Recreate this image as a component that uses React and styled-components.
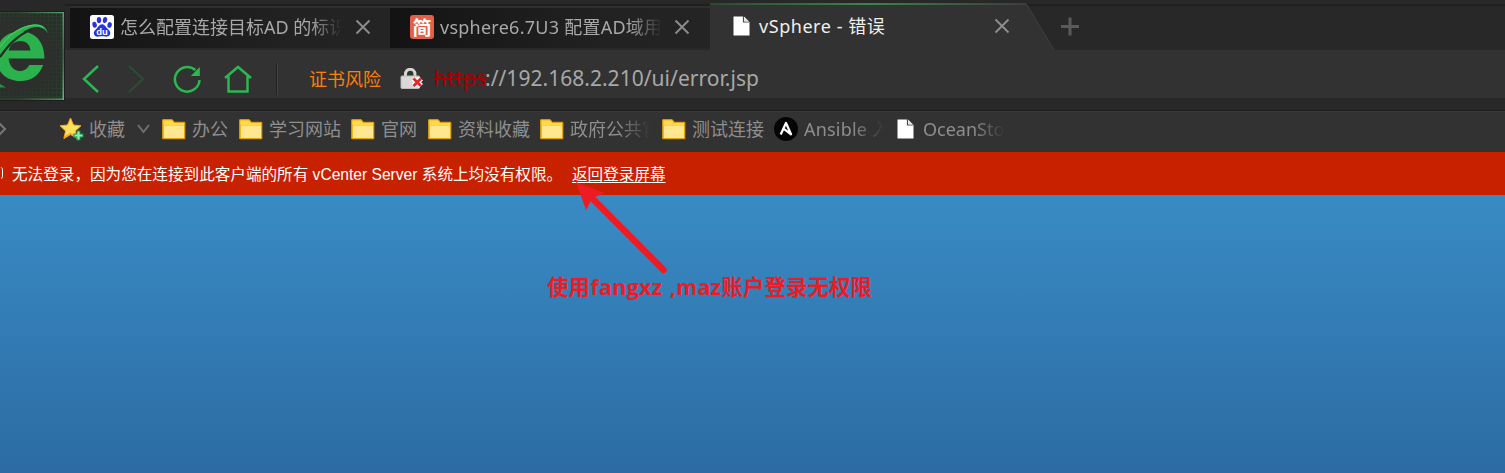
import React from 'react';
import styled, { createGlobalStyle, css } from 'styled-components';

const ui = `"Noto Sans", "Noto Sans CJK SC", sans-serif`;

const Global = createGlobalStyle`
  body { margin: 0; background: #282828; overflow: hidden; }
  * { box-sizing: border-box; }
  svg { display: block; flex: none; }
`;

const Page = styled.div`
  display: flex;
  flex-direction: column;
  width: 1505px;
  height: 473px;
  overflow: hidden;
  font-family: ${ui};
`;

const Chrome = styled.header`
  display: flex;
  height: 110px;
  background: #282828;
`;

const LogoBox = styled.div`
  width: 65px;
  height: 90px;
  margin-top: 11px;
  border: 1px solid #1b1f1c;
  border-left: 0;
  overflow: hidden;
`;

const ChromeMain = styled.div`
  flex: 1;
  display: flex;
  flex-direction: column;
`;

const TabStrip = styled.nav`
  display: flex;
  height: 50px;
  padding: 0 0 0 5px;
  background: linear-gradient(#282828 0 4px, #202020 4px 6px, #282828 6px);
`;

const Tab = styled.div`
  display: flex;
  align-items: center;
  width: 320px;
  height: 42px;
  margin-top: 6px;
  padding: 0 0 3px 20px;
  border-top: 2px solid #2f2f2f;
  background: linear-gradient(90deg, #131313 0, #1b1b1b 35%, #222 70%, #242424);
`;

const ActiveTab = styled.div`
  position: relative;
  display: flex;
  align-items: center;
  width: 346px;
  height: 47px;
  margin-top: 3px;
  padding: 0 0 1px 23px;
`;

const TabShape = styled.svg`
  position: absolute;
  inset: 0;
`;

const fade = css`
  mask-image: linear-gradient(90deg, #000 calc(100% - 32px), transparent 100%);
`;

const Label = styled.span`
  display: block;
  flex: none;
  position: relative;
  overflow: ${p => (p.$fade ? 'hidden' : 'visible')};
  white-space: pre;
  width: ${p => (p.$w ? `${p.$w}px` : 'auto')};
  font-size: ${p => p.$size || 18}px;
  line-height: 26px;
  letter-spacing: ${p => p.$track || 0}px;
  color: ${p => p.$color || '#a8a8a8'};
  ${p => p.$fade && fade}
`;

const TabLabel = styled(Label)`
  margin-left: ${p => p.$gap ?? 6}px;
`;

const CloseSlot = styled.div`
  position: relative;
  margin-left: ${p => p.$gap}px;
`;

const PlusSlot = styled.div`
  margin: 17px 0 0 4px;
`;

const AddressBar = styled.div`
  display: flex;
  align-items: center;
  height: 48px;
  padding: 10px 0 0 16px;
  background: #323232;
`;

const NavIcon = styled.div`
  width: ${p => p.$w}px;
`;

const Divider = styled.i`
  width: 2px;
  height: 32px;
  margin-right: 31px;
  background: linear-gradient(90deg, #222 50%, #444 50%);
`;

const Risk = styled(Label)`
  width: 91px;
`;

const Url = styled.div`
  display: flex;
  margin-left: 10px;
  padding-bottom: 2px;
`;

const Scheme = styled(Label)`
  text-decoration: line-through;
  text-decoration-thickness: 1.5px;
`;

const Bookmarks = styled.nav`
  display: flex;
  align-items: center;
  height: 42px;
  padding-bottom: 5px;
  border-top: 1px solid #1e1e1e;
  background: linear-gradient(#383838 0 1px, #323232 1px);
`;

const Bookmark = styled.div`
  display: flex;
  align-items: center;
  flex: none;
  width: ${p => p.$w}px;
`;

const IconCell = styled.span`
  display: flex;
  width: ${p => p.$w || 29}px;
  flex: none;
`;

const ErrorBar = styled.div`
  display: flex;
  align-items: center;
  height: 43px;
  padding-top: 2px;
  background: #c82100;
  color: #fff;
  font: 15.6px/22px "Liberation Sans", "Noto Sans CJK SC", sans-serif;
  white-space: pre;
`;

const InfoMark = styled.i`
  width: 3px;
  height: 12px;
  margin: -3px 9px 0 0;
  border-right: 1.5px solid #fff;
  border-radius: 0 5px 5px 0 / 0 6px 6px 0;
`;

const Message = styled.span`
  width: 560px;
`;

const BackLink = styled.a`
  text-decoration: underline;
  text-underline-offset: 1.5px;
  text-decoration-thickness: 1px;
`;

const Content = styled.main`
  position: relative;
  flex: 1;
  background: linear-gradient(#398bc5, #2c6ba3);
`;

const Arrow = styled.svg`
  position: absolute;
  left: 570px;
  top: -18px;
`;

const Note = styled.div`
  position: absolute;
  left: 547px;
  top: 77px;
  display: flex;
  color: #ed1c24;
  font: bold 21.5px/30px "Open Sans", "Noto Sans CJK SC", sans-serif;
  white-space: pre;
`;

const NoteRun = styled.span`
  width: ${p => p.$w}px;
  letter-spacing: ${p => p.$track || 0}px;
`;

const Close = () => (
  <svg width="16" height="16" viewBox="0 0 16 16" stroke="#8d8d8d" strokeWidth="1.9" fill="none">
    <path d="M1.500 1.500l13 13M14.500 1.500l-13 13" />
  </svg>
);

const Folder = () => (
  <svg width="24" height="21" viewBox="0 0 24 21">
    <path d="M.7.7h9.600l2 2.600h10.500v16.400H.7z" fill="#f5b81d" stroke="#e9a40b" />
    <path d="M1.500 1.500h8.300l2 2.600h10.200v2H1.500z" fill="#ffd94e" />
    <path d="M2 6.500h20v12.500H2z" fill="#ffe790" />
  </svg>
);

const Doc = () => (
  <svg width="17" height="20" viewBox="0 0 17 20">
    <path d="M.5.500h10.500l5.500 5.700v13.300H.5z" fill="#fff" />
    <path d="M10.500 0v6h6" fill="none" stroke="#484848" strokeWidth="1.200" />
    <path d="M12 1.500l4 4h-4z" fill="#ddd" />
  </svg>
);

const Star = () => (
  <svg width="24" height="24" viewBox="0 0 24 24">
    <path d="M10.500 1l3 7 7.500.7-5.600 5.300 1.700 7.500-6.600-4-6.600 4 1.700-7.500L0 8.700l7.500-.7z" fill="#ffe05a" stroke="#f5a91a" strokeLinejoin="round" />
    <path d="M4 20.500l6.500-4 6.300 4-1.500-6.500" fill="none" stroke="#f5a523" strokeWidth="1.200" />
    <path d="M16.500 13.500h4v3h3v4h-3v3h-4v-3h-3v-4h3z" fill="#158d4d" />
    <path d="M18.500 14.500v8M14.500 18.500h8" stroke="#88f0b3" strokeWidth="2.200" />
  </svg>
);

const Ansible = () => (
  <svg width="24" height="24" viewBox="0 0 24 24">
    <circle cx="12" cy="12" r="12" fill="#050505" />
    <path d="M6.700 17.500L12 6l5 11.300-7.500-5.600" fill="none" stroke="#fff" strokeWidth="2.300" strokeLinejoin="round" />
  </svg>
);

const Baidu = () => (
  <svg width="24" height="24" viewBox="0 0 24 24">
    <rect width="24" height="24" rx="2.500" fill="#fff" />
    <g fill="#2932e1">
      <ellipse cx="4.600" cy="9.800" rx="2.200" ry="3" transform="rotate(-12 4.600 9.800)" />
      <ellipse cx="9" cy="5" rx="2.200" ry="3.100" />
      <ellipse cx="15" cy="5" rx="2.200" ry="3.100" transform="rotate(8 15 5)" />
      <ellipse cx="19.600" cy="10" rx="2.200" ry="2.900" transform="rotate(12 19.600 10)" />
      <path d="M12 9.200c2.600 0 3.700 2.800 5.600 4.500 2 1.700 3 3.200 2.600 5.100-.6 2.900-3.500 3.100-5.200 2.800-2-.4-4-.4-6 0-2.500.4-4.700-.5-5.100-2.900-.3-2 .8-3.500 2.600-5 2-1.600 2.800-4.500 5.500-4.500z" />
    </g>
    <text x="12" y="19.700" textAnchor="middle" fontFamily="Liberation Sans, sans-serif" fontWeight="700" fontSize="9.500" fill="#fff">du</text>
  </svg>
);

const JianBox = styled.span`
  display: flex;
  align-items: center;
  justify-content: center;
  width: 24px;
  height: 24px;
  flex: none;
  border-radius: 3px;
  background: #e2604a;
  color: #fff;
  font: bold 19px/24px "Noto Sans CJK SC", sans-serif;
`;

const Lock = () => (
  <svg width="24" height="22" viewBox="0 0 24 22">
    <path d="M5.500 9V6a4.700 4.700 0 0 1 9.400 0v3" fill="none" stroke="#d5d5d5" strokeWidth="3" />
    <rect x="1" y="8" width="18.500" height="12.500" rx="1" fill="#d9d9d9" stroke="#bbb" />
    <path d="M13.500 10.500l7.500 7.500M21 10.500l-7.500 7.500" stroke="#fff" strokeWidth="5.500" />
    <path d="M13.500 10.500l7.500 7.500M21 10.500l-7.500 7.500" stroke="#e2262a" strokeWidth="2.800" />
  </svg>
);

const Logo = () => (
  <svg width="64" height="88" viewBox="0 12 64 88">
    <defs>
      <pattern id="grid" width="4" height="4" patternUnits="userSpaceOnUse">
        <path d="M0 .5h4M.5 0v4" stroke="#2d5938" strokeWidth="1" opacity=".4" />
      </pattern>
      <radialGradient id="shade" gradientUnits="userSpaceOnUse" cx="18" cy="56" r="57">
        <stop offset=".55" stopColor="#2d2f2d" />
        <stop offset="1" stopColor="#2d2f2d" stopOpacity="0" />
      </radialGradient>
      <linearGradient id="edge" x1="0" x2="1">
        <stop offset=".25" stopColor="#2a472f" />
        <stop offset="1" stopColor="#58a36a" />
      </linearGradient>
      <linearGradient id="side" x1="0" x2="0" y1="0" y2="1">
        <stop offset="0" stopColor="#52a366" />
        <stop offset=".5" stopColor="#3a6544" />
        <stop offset="1" stopColor="#5fbd77" />
      </linearGradient>
    </defs>
    <path d="M0 12h64v88H0z" fill="#292c29" />
    <path d="M0 12h64v88H0z" fill="url(#grid)" />
    <path d="M0 12h64v88H0z" fill="url(#shade)" />
    <path d="M0 12h64v1.300H0zM0 98.500h64v1.300H0z" fill="url(#edge)" />
    <path d="M62.500 12H64v88h-1.500z" fill="url(#side)" />
    <path d="M44.500 58.500H8.500C9.500 66 13.500 71 20 71c4.500 0 7.500-2.400 9.300-6h13.900C39 75.500 31.500 81 20.500 81 5.500 81-4 71-4 56.500S5.500 31.500 20.500 31.500c15 0 24 10.500 24 27zM30.500 50.500C30 45 26.500 41 20.500 41S9.700 45 8.700 50.500z" fill="#2bb24c" />
    <path d="M-1 47C7 36 19 25.500 35 24.500c7-.3 11.500 2.500 12.800 9C45 27.500 38 25.500 31 28 17 33 8 44 0 56z" fill="#2bb24c" />
    <path d="M0 57C9 44 17 36 31 29.500" fill="none" stroke="#232d26" strokeWidth="2.200" />
    <path d="M0 47C7 37 19 26.500 33 25c5-.4 8 .5 10.500 2.500" fill="none" stroke="#55cf73" strokeWidth="1" />
    <path d="M0 84l6 3.500H0z" fill="#249343" />
  </svg>
);

const marks = [
  [77, '办公', 40], [112, '学习网站', 76], [77, '官网', 40],
  [112, '资料收藏', 76], [122, '政府公共官网', 80, true], [112, '测试连接', 76],
];

export default function App() {
  return (
    <Page>
      <Global />
      <Chrome>
        <LogoBox><Logo /></LogoBox>
        <ChromeMain>
          <TabStrip>
            <Tab>
              <Baidu />
              <TabLabel $w={222} $fade>怎么配置连接目标AD 的标识</TabLabel>
              <CloseSlot $gap={13}><Close /></CloseSlot>
            </Tab>
            <Tab>
              <JianBox>简</JianBox>
              <TabLabel $w={222} $fade $track={0.25}>vsphere6.7U3 配置AD域用户</TabLabel>
              <CloseSlot $gap={12}><Close /></CloseSlot>
            </Tab>
            <ActiveTab>
              <TabShape width="346" height="47" viewBox="0 0 346 47">
                <defs>
                  <linearGradient id="glow" x1="0" x2="1">
                    <stop offset="0" stopColor="#2d4932" />
                    <stop offset=".5" stopColor="#3a8549" />
                    <stop offset="1" stopColor="#3d3d3d" />
                  </linearGradient>
                </defs>
                <path d="M0 0h316l28 47H0z" fill="#323232" />
                <path d="M316 .5l28 46.500" stroke="#404040" fill="none" />
                <path d="M0 0h316v2H0z" fill="url(#glow)" />
              </TabShape>
              <Label><Doc /></Label>
              <TabLabel $gap={9} $w={235} $track={0.55} $color="#efefef">vSphere - 错误</TabLabel>
              <CloseSlot $gap={0}><Close /></CloseSlot>
            </ActiveTab>
            <PlusSlot>
              <svg width="20" height="20" viewBox="0 0 20 20" stroke="#5a5a5a" strokeWidth="3">
                <path d="M10 .5v18M1 9.500h18" />
              </svg>
            </PlusSlot>
          </TabStrip>
          <AddressBar>
            <NavIcon $w={46}>
              <svg width="20" height="28" viewBox="0 0 20 28" fill="none" stroke="#2bb752" strokeWidth="2.500">
                <path d="M17 1L3 14l14 13" />
              </svg>
            </NavIcon>
            <NavIcon $w={46}>
              <svg width="20" height="28" viewBox="0 0 20 28" fill="none" stroke="#2d4d34" strokeWidth="2">
                <path d="M2 1l14 13L2 27" />
              </svg>
            </NavIcon>
            <NavIcon $w={51}>
              <svg width="28" height="28" viewBox="0 0 28 28" fill="none" stroke="#2bb752" strokeWidth="2.500">
                <path d="M26.500 15A12.300 12.300 0 1 1 22.500 5.200" />
                <path d="M26.800 2v9h-9z" fill="#2bb752" stroke="none" />
              </svg>
            </NavIcon>
            <NavIcon $w={52}>
              <svg width="28" height="28" viewBox="0 0 28 28" fill="none" stroke="#2bb752" strokeWidth="2.500">
                <path d="M1 13L14 2l13 11M4.500 11v15.500h19V11" />
              </svg>
            </NavIcon>
            <Divider />
            <Risk $color="#ff7d0a">证书风险</Risk>
            <Lock />
            <Url>
              <Scheme $size={21} $w={51} $track={0.3} $color="#a80000">https</Scheme>
              <Label $size={21} $track={0.03}>://192.168.2.210/ui/error.jsp</Label>
            </Url>
          </AddressBar>
        </ChromeMain>
      </Chrome>
      <Bookmarks>
        <IconCell $w={60}>
          <svg width="8" height="14" viewBox="0 0 8 14" fill="none" stroke="#777" strokeWidth="2"><path d="M-1 1l6 6-6 6" /></svg>
        </IconCell>
        <Bookmark $w={102}>
          <IconCell><Star /></IconCell>
          <Label $w={48} $color="#8e8e8e">收藏</Label>
          <svg width="13" height="10" viewBox="0 0 13 10" fill="none" stroke="#707070" strokeWidth="2"><path d="M1 1l5.500 7L12 1" /></svg>
        </Bookmark>
        {marks.map(([w, text, tw, f]) => (
          <Bookmark key={text} $w={w}>
            <IconCell $w={30}><Folder /></IconCell>
            <Label $w={tw} $fade={f} $color="#8e8e8e">{text}</Label>
          </Bookmark>
        ))}
        <Bookmark $w={123}>
          <IconCell $w={30}><Ansible /></IconCell>
          <Label $w={80} $fade $track={0.2} $color="#8e8e8e">Ansible 入门</Label>
        </Bookmark>
        <Bookmark $w={130}>
          <IconCell $w={26}><Doc /></IconCell>
          <Label $w={82} $fade $color="#8e8e8e">OceanStor</Label>
        </Bookmark>
      </Bookmarks>
      <ErrorBar>
        <InfoMark />
        <Message>无法登录，因为您在连接到此客户端的所有 vCenter Server 系统上均没有权限。</Message>
        <BackLink>返回登录屏幕</BackLink>
      </ErrorBar>
      <Content>
        <Arrow width="100" height="100" viewBox="570 177 100 100">
          <path d="M590 196L663.500 270" stroke="#ed1c24" strokeWidth="6.500" strokeLinecap="round" />
          <path d="M576 182l28.500 11-12 5-6.500 12z" fill="#ed1c24" />
        </Arrow>
        <Note>
          <NoteRun $w={43.5}>使用</NoteRun>
          <NoteRun $w={79.5} $track={0.25}>fangxz</NoteRun>
          <NoteRun $w={51.5} $track={0.1}>,maz</NoteRun>
          <NoteRun>账户登录无权限</NoteRun>
        </Note>
      </Content>
    </Page>
  );
}
